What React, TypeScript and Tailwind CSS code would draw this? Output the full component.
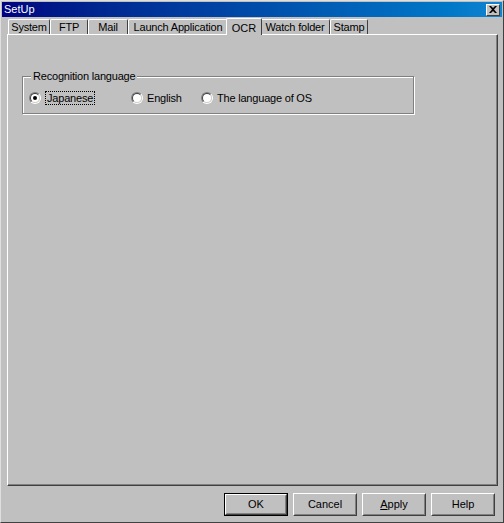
import React from "react";

const font = { fontFamily: '"Liberation Sans", Arial, sans-serif' };

const tabs = [
  { label: "System", w: "w-[42px]" },
  { label: "FTP", w: "w-[38px]" },
  { label: "Mail", w: "w-[40px]" },
  { label: "Launch Application", w: "w-[100px]" },
  { label: "OCR", w: "w-[36px]", active: true },
  { label: "Watch folder", w: "w-[70px]" },
  { label: "Stamp", w: "w-[38px]" },
];

function Radio({ checked }: { checked?: boolean }) {
  return (
    <span className="inline-flex w-[12px] h-[12px] rounded-full border border-t-[#808080] border-l-[#808080] border-r-white border-b-white">
      <span className="flex-1 rounded-full border border-t-[#404040] border-l-[#404040] border-r-[#d4d0c8] border-b-[#d4d0c8] bg-white flex items-center justify-center">
        {checked && <span className="w-[4px] h-[4px] rounded-full bg-black" />}
      </span>
    </span>
  );
}

function Button({ children, isDefault }: { children: React.ReactNode; isDefault?: boolean }) {
  return (
    <div className={`w-[64px] h-[23px] ${isDefault ? "border border-black" : ""}`}>
      <div className="w-full h-full border border-t-white border-l-white border-r-[#404040] border-b-[#404040]">
        <div className="w-full h-full border border-t-[#c0c0c0] border-l-[#c0c0c0] border-r-[#808080] border-b-[#808080] flex items-center justify-center text-[11px] text-black">
          {children}
        </div>
      </div>
    </div>
  );
}

export default function App() {
  return (
    <div className="w-[504px] h-[523px] bg-white" style={font}>
      <div className="w-[504px] h-[523px] bg-[#c0c0c0] border border-t-[#dfdfdf] border-l-[#dfdfdf] border-r-[#404040] border-b-[#404040] p-[1px] flex flex-col">
        {/* Title bar */}
        <div className="h-[15px] bg-gradient-to-r from-[#000080] to-[#1084d0] flex items-center justify-between pl-[2px] pr-[2px]">
          <span className="text-white text-[11px] leading-none">SetUp</span>
          <div className="w-[14px] h-[12px] bg-[#c0c0c0] border border-t-white border-l-white border-r-[#404040] border-b-[#404040] flex items-center justify-center">
            <svg width="8" height="7" viewBox="0 0 8 7">
              <path d="M0 0h2l2 2 2-2h2L5 3.5 8 7H6L4 5 2 7H0l3-3.5z" fill="#000" />
            </svg>
          </div>
        </div>

        {/* Tabs */}
        <div className="mt-[1px] ml-[5px] mr-[4px] flex flex-col flex-1">
          <div className="flex items-end h-[16px] pl-[1px]">
            {tabs.map((t) =>
              t.active ? (
                <div
                  key={t.label}
                  className={`relative -mx-[2px] ${t.w} h-[17px] border-t border-l border-t-white border-l-white border-r border-r-[#404040] bg-[#c0c0c0] z-10 text-[11px] flex justify-center pt-[1px] rounded-tl-[2px] rounded-tr-[2px] -mb-[1px]`}
                >
                  {t.label}
                </div>
              ) : (
                <div
                  key={t.label}
                  className={`${t.w} h-[15px] border-t border-l border-t-white border-l-white border-r border-r-[#404040] text-[11px] tracking-[-0.2px] flex items-center justify-center rounded-tl-[2px] rounded-tr-[2px]`}
                >
                  {t.label}
                </div>
              )
            )}
          </div>
          <div className="flex-1 border border-t-white border-l-white border-r-[#404040] border-b-[#404040]">
            <div className="h-full border-r border-b border-r-[#808080] border-b-[#808080] pt-[41px] pl-[14px]">
              {/* Group box */}
              <div className="relative w-[392px] h-[38px] border border-[#808080] shadow-[1px_1px_0_#fff,inset_1px_1px_0_#fff]">
                <span className="absolute -top-[8px] left-[8px] px-[2px] bg-[#c0c0c0] text-[11px] leading-[14px] tracking-[-0.2px]">
                  Recognition language
                </span>
                <div className="flex items-center h-full pt-[6px] pl-[6px] text-[11px] tracking-[-0.2px]">
                  <div className="flex items-center gap-[4px] w-[102px]">
                    <Radio checked />
                    <span className="border border-dotted border-black px-[1px] leading-[12px]">Japanese</span>
                  </div>
                  <div className="flex items-center gap-[4px] w-[70px]">
                    <Radio />
                    <span>English</span>
                  </div>
                  <div className="flex items-center gap-[4px]">
                    <Radio />
                    <span>The language of OS</span>
                  </div>
                </div>
              </div>
            </div>
          </div>
          <div className="h-[35px] flex items-start pt-[7px] justify-end gap-[5px] pr-[3px]">
            <Button isDefault>OK</Button>
            <Button>Cancel</Button>
            <Button>
              <span className="underline">A</span>pply
            </Button>
            <Button>Help</Button>
          </div>
        </div>
      </div>
    </div>
  );
}
